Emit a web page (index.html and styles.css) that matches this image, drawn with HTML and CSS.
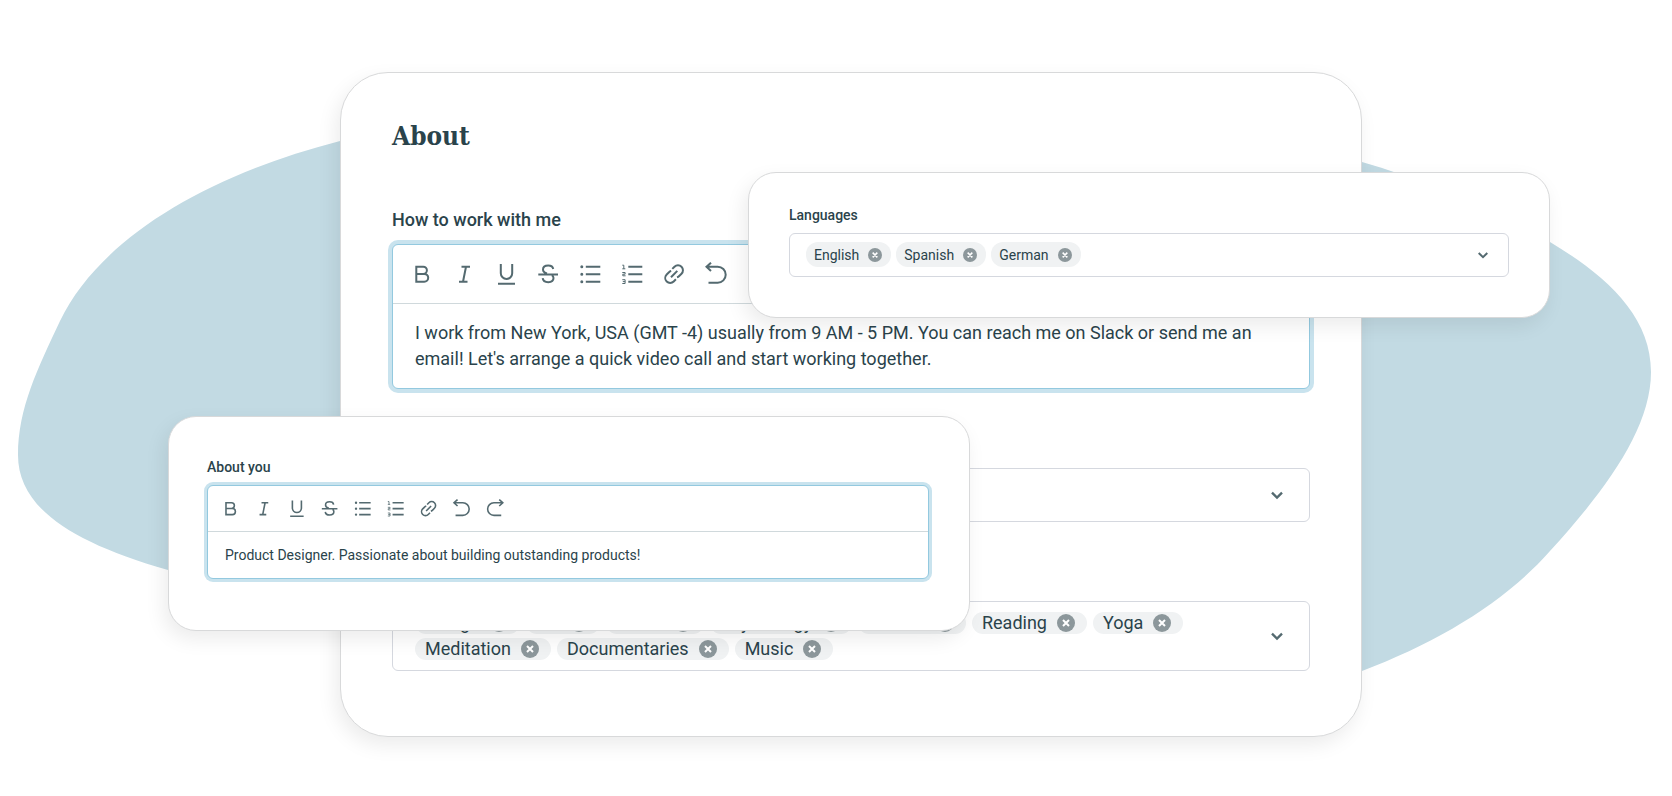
FILE: index.html
```html
<!DOCTYPE html>
<html lang="en">
<head>
    <meta charset="UTF-8">
    <meta name="viewport" content="width=device-width, initial-scale=1.0">
    <title>About</title>
    <link rel="stylesheet" href="styles.css">
</head>
<body>
    <!-- Icon set -->
    <svg class="icon-set" aria-hidden="true">
        <symbol id="icon-bold" viewBox="0 0 24 24">
            <path d="M6.3 4.7h7a3.6 3.6 0 0 1 0 7.2h-7zM6.3 11.9h8a3.9 3.9 0 0 1 0 7.8h-8z"/>
        </symbol>
        <symbol id="icon-italic" viewBox="0 0 24 24">
            <path d="M9.5 4.7H18M7 19.7h8.5M14 4.7l-3 15"/>
        </symbol>
        <symbol id="icon-underline" viewBox="0 0 24 24">
            <path d="M6.8 2v9.3a5.7 5.7 0 0 0 11.4 0V2M4 21.7h17"/>
        </symbol>
        <symbol id="icon-strike" viewBox="0 0 24 24">
            <path d="M2.3 12.4H22M17.2 7c-.3-2.2-2.2-3.5-5-3.5C9.2 3.5 7 5 7 7.5c0 2.2 1.6 3.3 4 4M16 13.2c1 .8 1.5 1.7 1.5 2.9 0 2.5-2.2 4.1-5.2 4.1-3.1 0-5.4-1.5-5.6-4"/>
        </symbol>
        <symbol id="icon-bullets" viewBox="0 0 24 24">
            <path d="M7.8 4.7h14.5M7.8 12.2h14.5M7.8 19.7h14.5"/>
            <path class="dots" d="M3.8 4.7h0M3.8 12.2h0M3.8 19.7h0"/>
        </symbol>
        <symbol id="icon-numbers" viewBox="0 0 24 24">
            <path d="M8.3 4.7h14M8.3 12.2h14M8.3 19.7h14"/>
            <path class="fine" d="M2.3 3.2h1.5v3.6M2.3 6.8h3M2.3 10.5h2.8v1.7H2.8v1.6h2.8M2.3 17.7h2.8v3.8H2.3M2.8 19.6h2.3"/>
        </symbol>
        <symbol id="icon-link" viewBox="0 0 24 24">
            <path d="M9 15.2l6.3-6.3M10.3 6.9l2.2-2.2a4.9 4.9 0 0 1 7 7l-2.3 2.3a4.9 4.9 0 0 1-2.2 1.3M13.9 17.3l-2.2 2.2a4.9 4.9 0 0 1-7-7L7 10.2a4.9 4.9 0 0 1 2.2-1.3"/>
        </symbol>
        <symbol id="icon-undo" viewBox="0 0 24 24">
            <path d="M2.5 4.7h11.2a8 8 0 0 1 0 16H4.5M7 .7l-4.5 4L7 8.9"/>
        </symbol>
        <symbol id="icon-redo" viewBox="0 0 24 24">
            <path d="M22.5 4.7H11.3a8 8 0 0 0 0 16h9.2M18 .7l4.5 4L18 8.9"/>
        </symbol>
        <symbol id="icon-chevron" viewBox="0 0 12 12">
            <path d="M1.7 4L6 8.2 10.3 4"/>
        </symbol>
        <symbol id="icon-remove" viewBox="0 0 18 18">
            <circle cx="9" cy="9" r="9"/>
            <path d="M6 6l6 6M12 6l-6 6"/>
        </symbol>
    </svg>

    <main class="stage">
        <svg class="blob" viewBox="0 0 1672 796" preserveAspectRatio="none" aria-hidden="true">
            <path d="M340 141C200 177 98 242 60 321C38 368 18 408 18 455C18 507 70 542 168 570L1362 671C1440 641 1505 602 1550 551C1603 493 1651 430 1651 372C1651 315 1605 275 1550 242C1490 205 1420 179 1362 162Z"/>
        </svg>

        <section class="card profile">
            <h1>About</h1>

            <div class="field">
                <label for="how-to">How to work with me</label>
                <div class="editor">
                    <div class="toolbar">
                        <button type="button" aria-label="Bold"><svg><use href="#icon-bold"/></svg></button>
                        <button type="button" aria-label="Italic"><svg><use href="#icon-italic"/></svg></button>
                        <button type="button" aria-label="Underline"><svg><use href="#icon-underline"/></svg></button>
                        <button type="button" aria-label="Strikethrough"><svg><use href="#icon-strike"/></svg></button>
                        <button type="button" aria-label="Bulleted list"><svg><use href="#icon-bullets"/></svg></button>
                        <button type="button" aria-label="Numbered list"><svg><use href="#icon-numbers"/></svg></button>
                        <button type="button" aria-label="Link"><svg><use href="#icon-link"/></svg></button>
                        <button type="button" aria-label="Undo"><svg><use href="#icon-undo"/></svg></button>
                    </div>
                    <textarea id="how-to" rows="2">I work from New York, USA (GMT -4) usually from 9 AM - 5 PM. You can reach me on Slack or send me an email! Let's arrange a quick video call and start working together.</textarea>
                </div>
            </div>

            <div class="field">
                <label for="skills">Skills</label>
                <div class="select-box">
                    <select id="skills"><option value=""></option></select>
                    <svg class="chevron"><use href="#icon-chevron"/></svg>
                </div>
            </div>

            <div class="field">
                <label for="interests">Interests</label>
                <div class="chip-box">
                    <ul class="chips">
                        <li>Design <button type="button" aria-label="Remove Design"><svg><use href="#icon-remove"/></svg></button></li>
                        <li>Art <button type="button" aria-label="Remove Art"><svg><use href="#icon-remove"/></svg></button></li>
                        <li>Travel <button type="button" aria-label="Remove Travel"><svg><use href="#icon-remove"/></svg></button></li>
                        <li>Psychology <button type="button" aria-label="Remove Psychology"><svg><use href="#icon-remove"/></svg></button></li>
                        <li>Movies <button type="button" aria-label="Remove Movies"><svg><use href="#icon-remove"/></svg></button></li>
                        <li>Reading <button type="button" aria-label="Remove Reading"><svg><use href="#icon-remove"/></svg></button></li>
                        <li>Yoga <button type="button" aria-label="Remove Yoga"><svg><use href="#icon-remove"/></svg></button></li>
                        <li>Meditation <button type="button" aria-label="Remove Meditation"><svg><use href="#icon-remove"/></svg></button></li>
                        <li>Documentaries <button type="button" aria-label="Remove Documentaries"><svg><use href="#icon-remove"/></svg></button></li>
                        <li>Music <button type="button" aria-label="Remove Music"><svg><use href="#icon-remove"/></svg></button></li>
                    </ul>
                    <button type="button" id="interests"><svg class="chevron"><use href="#icon-chevron"/></svg></button>
                </div>
            </div>
        </section>

        <section class="card popup languages">
            <div class="field">
                <label for="languages">Languages</label>
                <div class="chip-box">
                    <ul class="chips">
                        <li>English <button type="button" aria-label="Remove English"><svg><use href="#icon-remove"/></svg></button></li>
                        <li>Spanish <button type="button" aria-label="Remove Spanish"><svg><use href="#icon-remove"/></svg></button></li>
                        <li>German <button type="button" aria-label="Remove German"><svg><use href="#icon-remove"/></svg></button></li>
                    </ul>
                    <button type="button" id="languages"><svg class="chevron"><use href="#icon-chevron"/></svg></button>
                </div>
            </div>
        </section>

        <section class="card popup about-you">
            <div class="field">
                <label for="about-you">About you</label>
                <div class="editor">
                    <div class="toolbar">
                        <button type="button" aria-label="Bold"><svg><use href="#icon-bold"/></svg></button>
                        <button type="button" aria-label="Italic"><svg><use href="#icon-italic"/></svg></button>
                        <button type="button" aria-label="Underline"><svg><use href="#icon-underline"/></svg></button>
                        <button type="button" aria-label="Strikethrough"><svg><use href="#icon-strike"/></svg></button>
                        <button type="button" aria-label="Bulleted list"><svg><use href="#icon-bullets"/></svg></button>
                        <button type="button" aria-label="Numbered list"><svg><use href="#icon-numbers"/></svg></button>
                        <button type="button" aria-label="Link"><svg><use href="#icon-link"/></svg></button>
                        <button type="button" aria-label="Undo"><svg><use href="#icon-undo"/></svg></button>
                        <button type="button" aria-label="Redo"><svg><use href="#icon-redo"/></svg></button>
                    </div>
                    <textarea id="about-you" rows="1">Product Designer. Passionate about building outstanding products!</textarea>
                </div>
            </div>
        </section>
    </main>
</body>
</html>
```
FILE: styles.css
```css
* {
    box-sizing: border-box;
}
body {
    margin: 0;
    background-color: #fff;
    color: #2a434b;
    font-family: Roboto, Arial, sans-serif;
    font-size: 18px;
    line-height: 26px;
}
button {
    display: block;
    margin: 0;
    padding: 0;
    border: none;
    background: none;
    cursor: pointer;
}
svg {
    display: block;
    fill: none;
    stroke: #546a70;
    stroke-width: 2;
}
.icon-set {
    position: absolute;
    width: 0;
    height: 0;
}
.stage {
    position: relative;
    min-height: 100vh;
    padding: 72px 310px 58px 340px;
}
.blob {
    position: absolute;
    top: 0;
    left: 0;
    width: 100%;
    height: 100%;
    fill: #c2dae3;
    stroke: none;
}

/* Cards */
.card {
    border: 1px solid #d8d9da;
    background-color: #fff;
    box-shadow: -4px 8px 20px rgba(0, 0, 0, 0.08);
}
.profile {
    position: relative;
    padding: 43px 51px 65px;
    border-radius: 48px;
}
.popup {
    position: absolute;
    border-radius: 28px;
    font-size: 14px;
    line-height: 20px;
}
.languages {
    top: 172px;
    left: 748px;
    right: 122px;
    padding: 32px 40px 40px;
}
.about-you {
    top: 416px;
    left: 168px;
    right: 702px;
    padding: 40px 40px 51px 38px;
}
h1 {
    margin: 0 0 52px;
    font-family: "DejaVu Serif Condensed", "DejaVu Serif", serif;
    font-size: 26px;
    font-weight: bold;
    line-height: 40px;
}

/* Fields */
.field + .field {
    margin-top: 43px;
}
label {
    display: block;
    margin-bottom: 12px;
    font-weight: 500;
    line-height: 24px;
}
.popup label {
    margin-bottom: 8px;
    line-height: 20px;
}
.editor {
    border: 1px solid #93c9df;
    border-radius: 6px;
    background-color: #fff;
    box-shadow: 0 0 0 4px #c9e3ee;
}
.toolbar {
    display: flex;
    align-items: center;
    gap: 18px;
    height: 59px;
    padding: 0 17px;
    border-bottom: 1px solid #d0d9dc;
}
.toolbar svg {
    width: 24px;
    height: 24px;
}
.fine {
    stroke-width: 1;
}
.dots {
    stroke-width: 3;
    stroke-linecap: round;
}
.popup .editor {
    box-shadow: 0 0 0 3px #c9e3ee;
}
.popup .toolbar {
    gap: 14px;
    height: 46px;
    padding: 0 13px;
}
.popup .toolbar svg {
    width: 19px;
    height: 19px;
}
textarea {
    display: block;
    width: 100%;
    padding: 16px 22px;
    border: none;
    outline: none;
    resize: none;
    overflow: hidden;
    background: none;
    color: inherit;
    font: inherit;
}
.popup textarea {
    padding: 13px 17px;
}

/* Drop-downs */
.select-box {
    position: relative;
}
select {
    display: block;
    width: 100%;
    height: 54px;
    padding: 0 22px;
    border: 1px solid #d5d8df;
    border-radius: 6px;
    background-color: #fff;
    color: inherit;
    font: inherit;
    appearance: none;
}
.chevron {
    width: 14px;
    height: 14px;
}
.select-box .chevron {
    position: absolute;
    top: 20px;
    right: 26px;
    pointer-events: none;
}
.chip-box {
    display: flex;
    align-items: center;
    justify-content: space-between;
    padding: 10px 25px 10px 22px;
    border: 1px solid #d5d8df;
    border-radius: 6px;
    background-color: #fff;
}
.popup .chip-box {
    padding: 8px 19px 9px 16px;
}
.popup .chevron {
    width: 12px;
    height: 12px;
}

/* Chips */
.chips {
    display: flex;
    flex-wrap: wrap;
    gap: 4px 6px;
    max-width: 800px;
    margin: 0;
    padding: 0;
    list-style-type: none;
}
.chips li {
    display: flex;
    align-items: center;
    gap: 10px;
    height: 22px;
    padding: 0 12px 0 10px;
    border-radius: 12px;
    background-color: #f0f2f3;
}
.chips svg {
    width: 18px;
    height: 18px;
    stroke: #fff;
}
#icon-remove circle {
    fill: #8c979b;
    stroke: none;
}
.popup .chips {
    gap: 5px;
}
.popup .chips li {
    gap: 9px;
    height: 25px;
    padding: 0 9px 0 8px;
}
.popup .chips svg {
    width: 14px;
    height: 14px;
}
```
